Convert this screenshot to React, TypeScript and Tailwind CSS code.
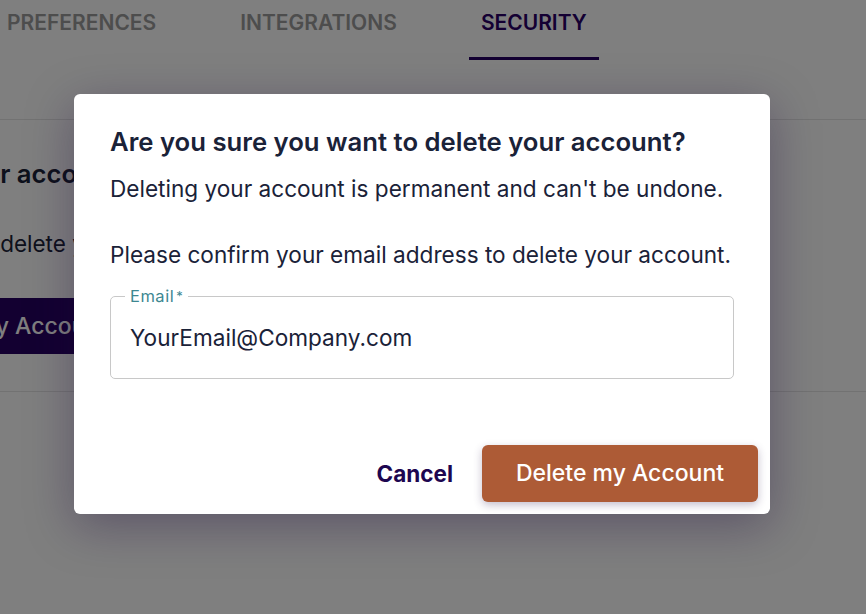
import React from 'react'

const tabs = ['PREFERENCES', 'INTEGRATIONS', 'SECURITY']

export default function App() {
  return (
    <div className="relative w-[866px] h-[614px] overflow-hidden bg-white font-['Inter',sans-serif] text-[#1a2238]">
      {/* Page behind the dialog */}
      <div className="flex gap-[60px] -ml-[5px] h-[60px]">
        {tabs.map(t => (
          <div
            key={t}
            className={`box-border h-[60px] px-3 pt-[9px] text-[21px] leading-[28px] font-semibold ${
              t === 'SECURITY' ? 'text-[#280066] border-b-[3px] border-[#280066]' : 'text-[#9b9b9b]'
            }`}
          >
            {t}
          </div>
        ))}
      </div>
      <div className="h-[60px] border-b border-[#e4e4e4]" />

      <div className="-ml-[110px] border-b border-[#e4e4e4] pb-[37px]">
        <h2 className="-ml-[22px] mt-[38px] text-[25.7px] font-semibold leading-[32px] whitespace-nowrap">Delete your account</h2>
        <p className="mt-[39px] pl-[2px] text-[22.5px] leading-[30px] whitespace-nowrap">Once you delete your account, all of your data will be removed.</p>
        <button className="-ml-[23px] mt-[39px] h-[56px] px-[32px] rounded-[6px] bg-[#260062] text-white text-[23px] font-medium whitespace-nowrap">
          Delete my Account
        </button>
      </div>

      {/* Overlay */}
      <div className="absolute inset-0 bg-black/50" />

      {/* Dialog */}
      <div className="absolute left-[74px] top-[94px] w-[696px] h-[420px] bg-white rounded-[6px] shadow-[0_12px_48px_rgba(30,10,60,0.35)] flex flex-col">
        <div className="px-[36px] pt-[32px]">
          <h3 className="text-[25.7px] font-semibold leading-[32px] whitespace-nowrap">Are you sure you want to delete your account?</h3>
          <p className="mt-[16px] text-[22.6px] leading-[30px] whitespace-nowrap">Deleting your account is permanent and can't be undone.</p>
          <p className="mt-[36px] text-[22.6px] leading-[30px] whitespace-nowrap">Please confirm your email address to delete your account.</p>

          <fieldset className="mt-[18px] h-[91px] border border-[#c8c8c8] rounded-[5px] pl-[19px] pr-[15px] pb-[10px]">
            <legend className="px-[5px] -ml-[5px] text-[16.5px] leading-[16px] tracking-[0.5px] text-[#3d8791]">
              Email<span className="ml-[2px] text-[13px] align-top">*</span>
            </legend>
            <div className="mt-[19px] text-[22.6px] leading-[30px]">YourEmail@Company.com</div>
          </fieldset>
        </div>

        <div className="mt-auto flex items-center justify-end gap-[29px] pr-[12px] pb-[12px]">
          <button className="text-[22.5px] font-bold text-[#1d0650]">Cancel</button>
          <button className="w-[276px] h-[57px] rounded-[6px] bg-[#ad5b36] text-white text-[23px] font-medium shadow-[0_3px_8px_rgba(60,40,90,0.3)]">
            Delete my Account
          </button>
        </div>
      </div>
    </div>
  )
}
